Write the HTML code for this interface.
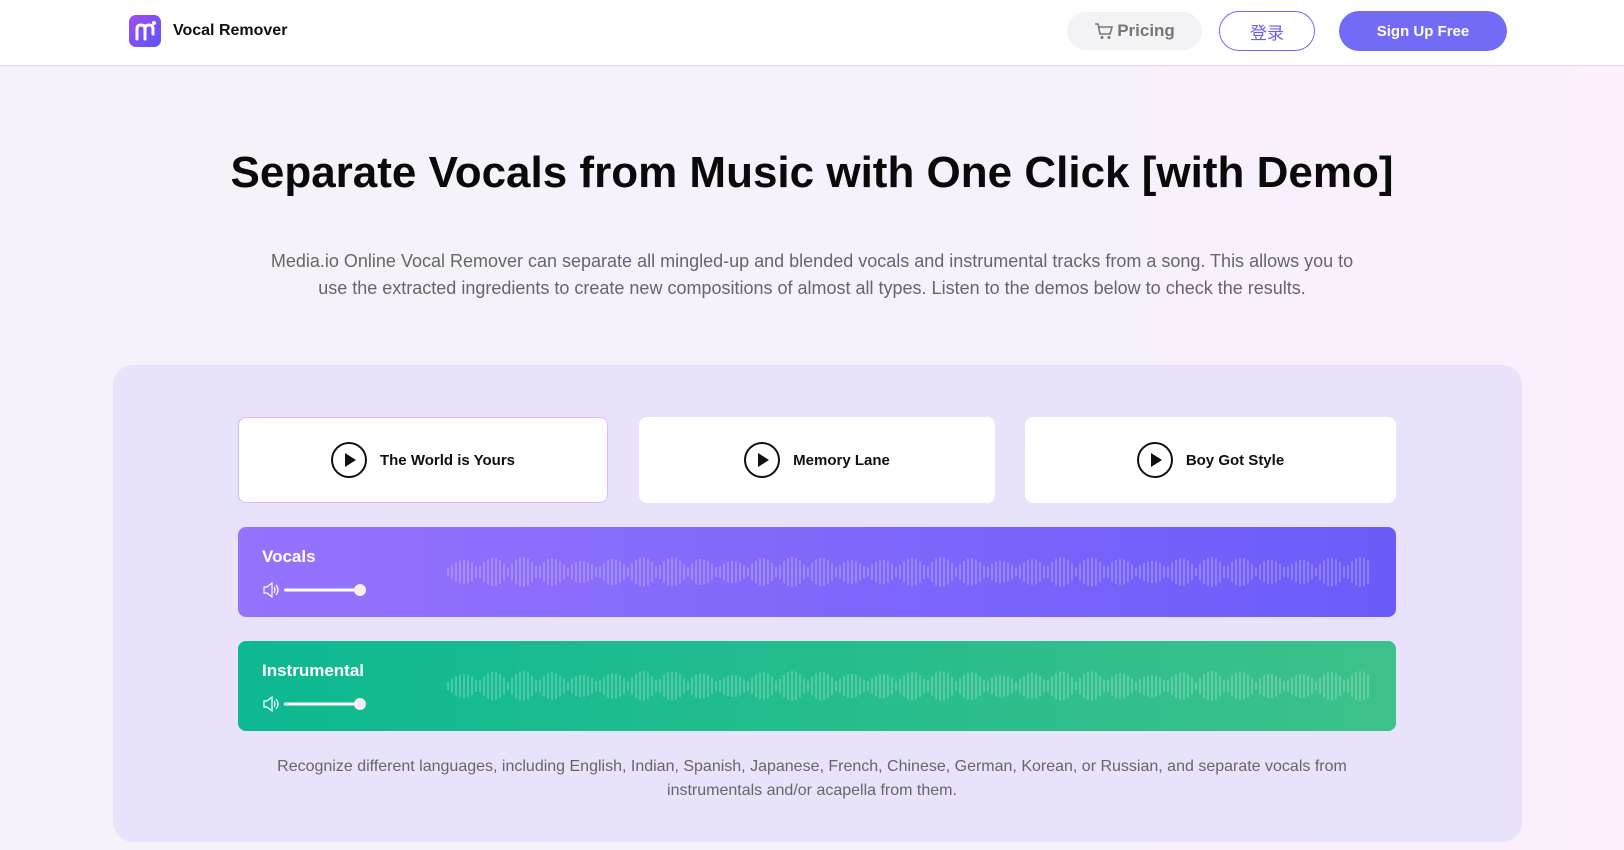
<!DOCTYPE html>
<html><head><meta charset="utf-8"><style>
*{margin:0;padding:0;box-sizing:border-box}
body{width:1624px;height:850px;overflow:hidden;font-family:"Liberation Sans","Noto Sans CJK SC",sans-serif;background:linear-gradient(90deg,#f7f2fa,#f6f1fb 60%,#fbf0fb);position:relative}
.hdr{position:absolute;left:0;top:0;width:1624px;height:66px;background:#fff;border-bottom:1px solid #ddd6e6}
.logo{position:absolute;left:129px;top:15px;width:32px;height:32px;border-radius:7px;background:linear-gradient(135deg,#a04cf0,#5b55f6)}
.brand{position:absolute;left:173px;top:22px;font-size:16px;font-weight:bold;color:#111}
.pricing{position:absolute;left:1067px;top:12px;width:135px;height:38px;border-radius:19px;background:#f3f3f5;color:#777;font-size:17px;font-weight:bold;display:flex;align-items:center;justify-content:center;gap:3px}
.login{position:absolute;left:1219px;top:11px;width:96px;height:40px;border-radius:20px;border:1.5px solid #7468f3;color:#6b5cf3;font-size:17px;display:flex;align-items:center;justify-content:center}
.signup{position:absolute;left:1339px;top:11px;width:168px;height:40px;border-radius:20px;background:#736bf5;color:#fff;font-size:15px;font-weight:bold;display:flex;align-items:center;justify-content:center}
h1{position:absolute;left:0;width:1624px;top:148px;text-align:center;font-size:44px;font-weight:bold;color:#0a0a0a}
.desc{position:absolute;left:262px;width:1100px;top:248px;text-align:center;font-size:18px;line-height:27px;color:#666}
.card{position:absolute;left:113px;top:365px;width:1409px;height:477px;border-radius:20px;background:#e8e2fb}
.song{position:absolute;top:417px;height:86px;background:#fff;border-radius:8px;display:flex;align-items:center;justify-content:center;gap:13px;font-size:15px;font-weight:bold;color:#111}
.play{width:36px;height:36px;border:2px solid #111;border-radius:50%;position:relative}
.play:after{content:"";position:absolute;left:12px;top:9px;border-left:11px solid #111;border-top:7px solid transparent;border-bottom:7px solid transparent}
.bar{position:absolute;left:238px;width:1158px;height:90px;border-radius:8px}
.lbl{position:absolute;left:24px;top:20px;color:#fff;font-size:17px;font-weight:bold}
.vol{position:absolute;left:24px;top:55px}
.foot{position:absolute;left:250px;width:1124px;top:755px;text-align:center;font-size:16px;line-height:24px;color:#666}
</style></head><body>
<div class="hdr">
<div class="logo"><svg width="32" height="32"><path d="M8 24V14q0-4 4-4t4 4v10M16 14q0-4 4-4t4 4v5" stroke="#fff" stroke-width="3" fill="none" stroke-linecap="round"/><circle cx="25" cy="8" r="2" fill="#fff"/></svg></div>
<div class="brand">Vocal Remover</div>
<div class="pricing"><svg width="20" height="18" viewBox="0 0 20 18"><path d="M1 2h3l2 10h10l2-7H5" stroke="#777" stroke-width="1.6" fill="none"/><circle cx="8" cy="15.5" r="1.5" fill="#777"/><circle cx="15" cy="15.5" r="1.5" fill="#777"/></svg>Pricing</div>
<div class="login">登录</div>
<div class="signup">Sign Up Free</div>
</div>
<h1>Separate Vocals from Music with One Click [with Demo]</h1>
<div class="desc">Media.io Online Vocal Remover can separate all mingled-up and blended vocals and instrumental tracks from a song. This allows you to use the extracted ingredients to create new compositions of almost all types. Listen to the demos below to check the results.</div>
<div class="card"></div>
<div class="song" style="left:238px;width:370px;border:1px solid #e7b8f5;box-shadow:-1px 0 0 #b8f0f5"><div class="play"></div>The World is Yours</div>
<div class="song" style="left:639px;width:356px"><div class="play"></div>Memory Lane</div>
<div class="song" style="left:1025px;width:371px"><div class="play"></div>Boy Got Style</div>
<div class="bar" style="top:527px;background:linear-gradient(90deg,#9673fd,#6a5cf9)"><div class="lbl">Vocals</div>
<svg class="vol" width="110" height="16"><path d="M2 5h3l5-4v14l-5-4H2z" stroke="#fff" fill="none" stroke-width="1.2"/><path d="M12 5q2 3 0 6M14 3q4 5 0 10" stroke="#fff" fill="none" stroke-width="1.2"/><rect x="22" y="6.5" width="76" height="3" rx="1.5" fill="#fff"/><circle cx="98" cy="8" r="6" fill="#fbeef3"/></svg>
<svg class="wave" style="position:absolute;left:209px;top:25px" width="930" height="40"></svg></div>
<div class="bar" style="top:641px;background:linear-gradient(90deg,#0db991,#3dc18a)"><div class="lbl">Instrumental</div>
<svg class="vol" width="110" height="16"><path d="M2 5h3l5-4v14l-5-4H2z" stroke="#fff" fill="none" stroke-width="1.2"/><path d="M12 5q2 3 0 6M14 3q4 5 0 10" stroke="#fff" fill="none" stroke-width="1.2"/><rect x="22" y="6.5" width="76" height="3" rx="1.5" fill="#fff"/><circle cx="98" cy="8" r="6" fill="#fbeef3"/></svg>
<svg class="wave" style="position:absolute;left:209px;top:25px" width="930" height="40"></svg></div>
<div class="foot">Recognize different languages, including English, Indian, Spanish, Japanese, French, Chinese, German, Korean, or Russian, and separate vocals from instrumentals and/or acapella from them.</div>
<script>
var s='';for(var i=0;i<231;i++){var h=8+22*Math.abs(Math.sin(i*0.42))*(0.6+0.4*Math.abs(Math.sin(i*0.09)));s+='<rect x="'+(i*4)+'" y="'+(20-h/2).toFixed(1)+'" width="2" height="'+h.toFixed(1)+'" fill="rgba(255,255,255,0.22)"/>';}
document.querySelectorAll('.wave').forEach(function(e){e.innerHTML=s;});
</script>
</body></html>
